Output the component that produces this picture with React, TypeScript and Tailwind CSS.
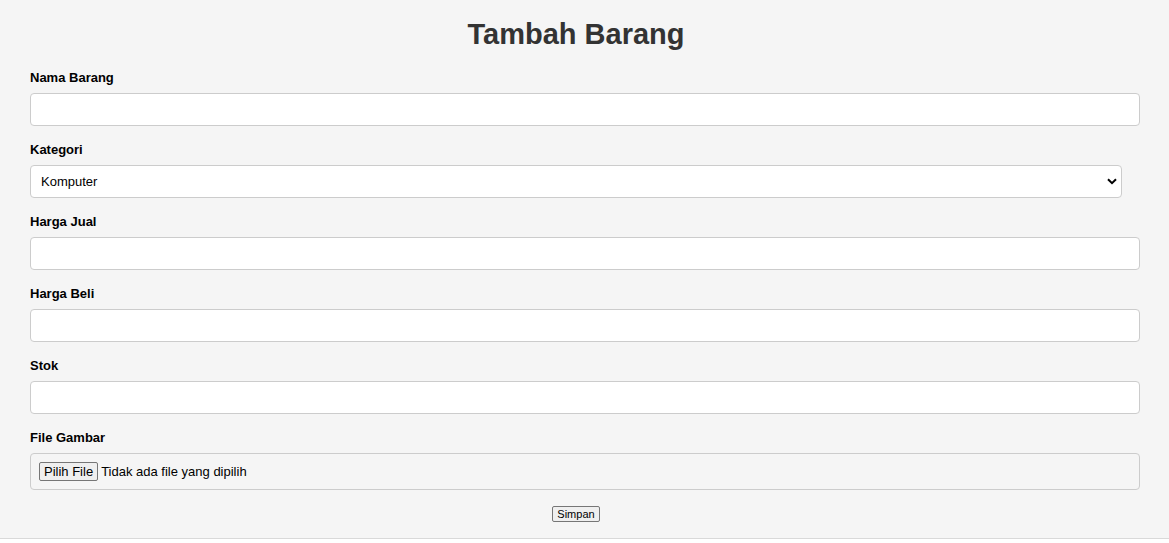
import { useState } from "react";
import type { ReactNode } from "react";

const control =
  "block h-[33px] w-[calc(100%+18px)] rounded-[4px] border border-[#cccccc] bg-white px-2 text-[13px] leading-[15px] text-black";

function Field({ id, label, children }: { id: string; label: string; children: ReactNode }) {
  return (
    <div className="mb-4">
      <label htmlFor={id} className="mb-2 block text-[13px] leading-[15px] font-bold text-black">
        {label}
      </label>
      {children}
    </div>
  );
}

export default function App() {
  const [fileName, setFileName] = useState("");

  return (
    <main className="min-h-screen bg-white font-['Liberation_Sans',Arial,sans-serif]">
      <section className="border-b border-[#d9d9d9] bg-[#f5f5f5] pt-[18px] pr-[47px] pb-4 pl-[30px]">
        <h1 className="mb-5 text-center text-[29px] leading-8 font-bold text-[#333333]">Tambah Barang</h1>
        <form onSubmit={(event) => event.preventDefault()}>
          <Field id="nama" label="Nama Barang">
            <input id="nama" name="nama" type="text" className={control} />
          </Field>
          <Field id="kategori" label="Kategori">
            <div className="relative">
              <select
                id="kategori"
                name="kategori"
                className="block h-[33px] w-full appearance-none rounded-[4px] border border-[#cccccc] bg-white pr-6 pl-[10px] text-[13px] leading-[15px] text-black"
              >
                <option>Komputer</option>
              </select>
              <svg
                aria-hidden="true"
                viewBox="0 0 10 7"
                className="pointer-events-none absolute top-[13px] right-[5px] h-[7px] w-[10px]"
              >
                <path d="M1 1.2 5 5.2 9 1.2" fill="none" stroke="#000000" strokeWidth="2" />
              </svg>
            </div>
          </Field>
          <Field id="harga-jual" label="Harga Jual">
            <input id="harga-jual" name="harga_jual" type="text" className={control} />
          </Field>
          <Field id="harga-beli" label="Harga Beli">
            <input id="harga-beli" name="harga_beli" type="text" className={control} />
          </Field>
          <Field id="stok" label="Stok">
            <input id="stok" name="stok" type="text" className={control} />
          </Field>
          <Field id="gambar" label="File Gambar">
            <div className="relative flex w-[calc(100%+18px)] items-center gap-[3px] rounded-[4px] border border-[#cccccc] p-2 text-[13px] leading-[15px] text-black">
              <span
                aria-hidden="true"
                className="rounded-[2px] border border-[#767676] bg-[#efefef] px-1 py-px"
              >
                Pilih File
              </span>
              <span>{fileName || "Tidak ada file yang dipilih"}</span>
              <input
                id="gambar"
                name="gambar"
                type="file"
                className="absolute inset-0 h-full w-full opacity-0"
                onChange={(event) => setFileName(event.target.files?.[0]?.name ?? "")}
              />
            </div>
          </Field>
          <button
            type="submit"
            className="mx-auto block rounded-[2px] border border-[#767676] bg-[#efefef] px-1 py-px text-[11px] leading-3 text-black"
          >
            Simpan
          </button>
        </form>
      </section>
    </main>
  );
}
